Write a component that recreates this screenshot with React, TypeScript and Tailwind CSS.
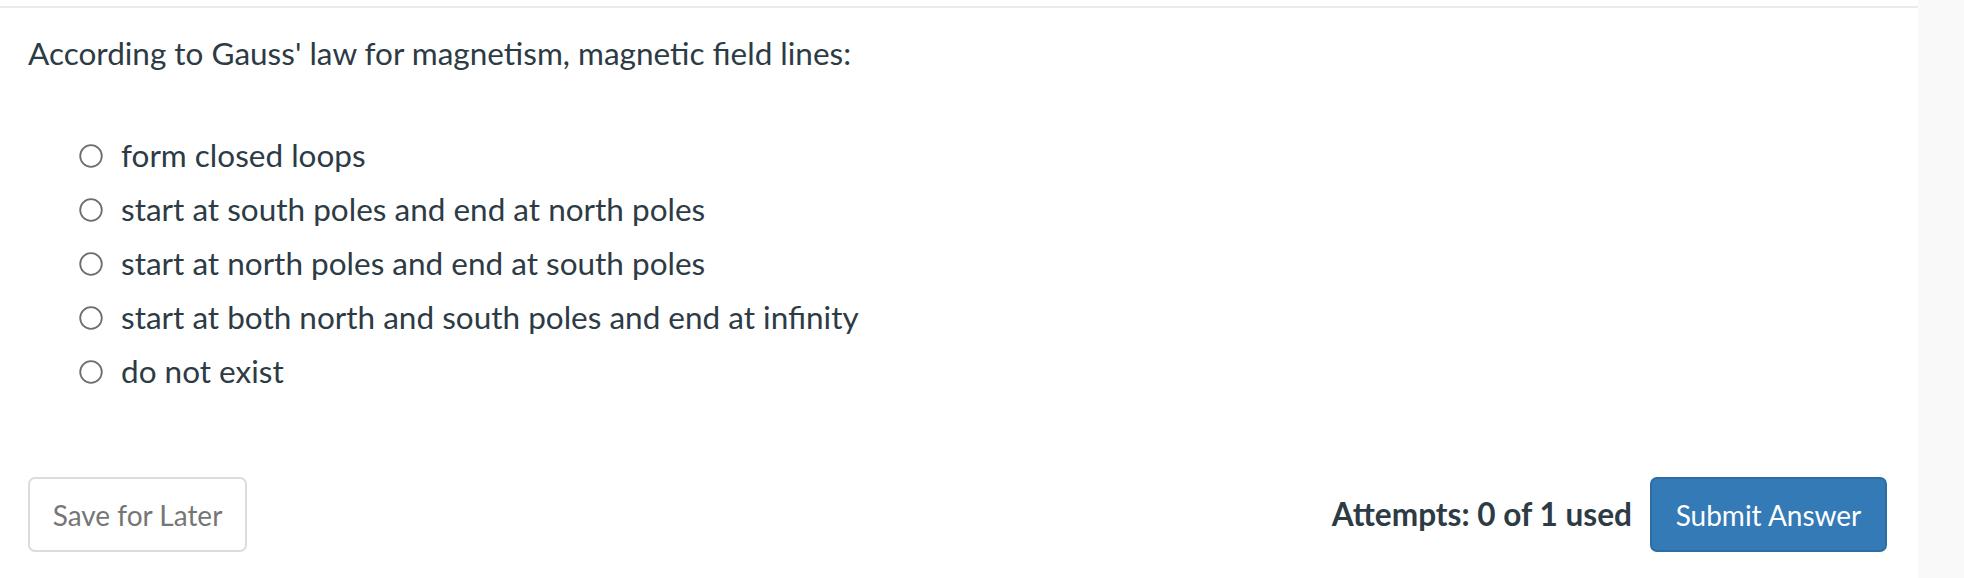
import React from "react";

const options = [
  "form closed loops",
  "start at south poles and end at north poles",
  "start at north poles and end at south poles",
  "start at both north and south poles and end at infinity",
  "do not exist",
];

export default function App() {
  return (
    <div
      className="flex w-[1964px] h-[578px] bg-white text-[#2d3b45]"
      style={{ fontFamily: "Lato, 'Open Sans', sans-serif" }}
    >
      <div className="w-[1918px] flex flex-col">
        <div className="mt-[6px] h-[2px] bg-[#ebebeb]" />
        <div className="pl-[28px] pr-[31px] pt-[18px] flex flex-col">
          <div className="text-[31.5px] leading-[54px]">
            According to Gauss' law for magnetism, magnetic field lines:
          </div>
          <div className="mt-[49px] pl-[79px] -ml-[28px] flex flex-col">
            {options.map((o) => (
              <label key={o} className="flex items-center h-[54px] text-[31.5px]">
                <svg width="24" height="24" viewBox="0 0 24 24" className="shrink-0">
                  <circle cx="12" cy="12" r="10.8" fill="white" stroke="#6e6e6e" strokeWidth="1.8" />
                </svg>
                <span className="ml-[18px]">{o}</span>
              </label>
            ))}
          </div>
          <div className="mt-[78px] flex items-center justify-between">
            <button className="w-[219px] h-[75px] rounded-[7px] border-2 border-[#dcdcdc] bg-white text-[#767676] text-[28px]">
              Save for Later
            </button>
            <div className="flex items-center gap-[18px]">
              <span className="font-bold text-[31.6px]">Attempts: 0 of 1 used</span>
              <button className="w-[237px] h-[75px] rounded-[7px] border-2 border-[#2e6da4] bg-[#337ab7] text-white text-[28px]">
                Submit Answer
              </button>
            </div>
          </div>
        </div>
      </div>
      <div className="flex-1 bg-[#f9f9f9]" />
    </div>
  );
}
